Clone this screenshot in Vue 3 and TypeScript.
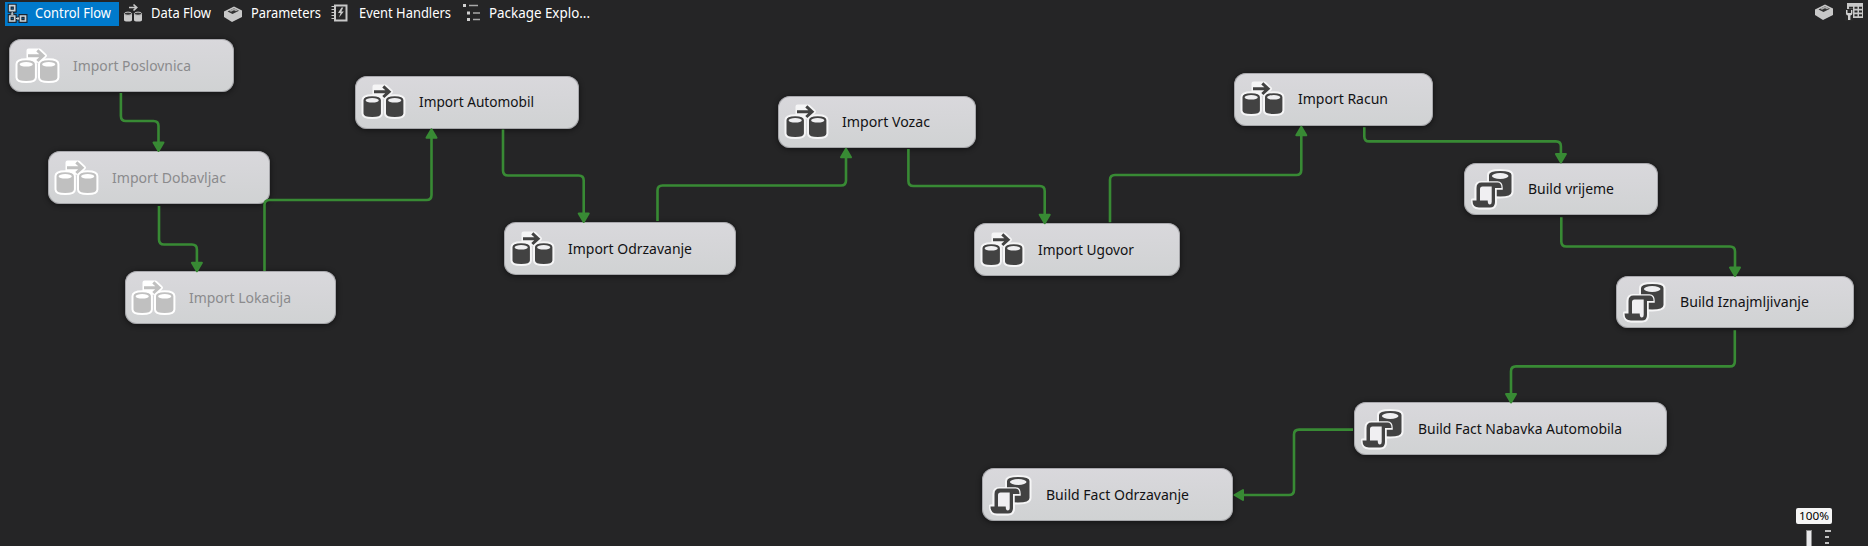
<script setup lang="ts">
type Kind = 'flow' | 'script'
interface TaskNode { label: string; kind: Kind; x: number; y: number; w: number; text: number; off?: boolean }
interface Link { path: string; tip: [number, number]; turn: number }

const tabs = [
  { id: 'control', label: 'Control Flow', width: 114, text: 76 },
  { id: 'data', label: 'Data Flow', width: 100, text: 60 },
  { id: 'params', label: 'Parameters', width: 108, text: 70 },
  { id: 'events', label: 'Event Handlers', width: 130, text: 92 },
  { id: 'explorer', label: 'Package Explo...', width: 140, text: 101 },
]

const nodes: TaskNode[] = [
  { label: 'Import Poslovnica', kind: 'flow', x: 9, y: 39.3, w: 225, text: 118, off: true },
  { label: 'Import Dobavljac', kind: 'flow', x: 48, y: 151.3, w: 222, text: 114, off: true },
  { label: 'Import Lokacija', kind: 'flow', x: 125.3, y: 271.3, w: 211, text: 102, off: true },
  { label: 'Import Automobil', kind: 'flow', x: 355, y: 76, w: 224, text: 115 },
  { label: 'Import Odrzavanje', kind: 'flow', x: 504, y: 222.3, w: 232, text: 124 },
  { label: 'Import Vozac', kind: 'flow', x: 778.3, y: 95.7, w: 197.4, text: 88 },
  { label: 'Import Ugovor', kind: 'flow', x: 974.3, y: 223.3, w: 205.3, text: 96 },
  { label: 'Import Racun', kind: 'flow', x: 1234, y: 73, w: 198.7, text: 90 },
  { label: 'Build vrijeme', kind: 'script', x: 1464, y: 162.7, w: 194, text: 86 },
  { label: 'Build Iznajmljivanje', kind: 'script', x: 1616.3, y: 275.7, w: 237.4, text: 129 },
  { label: 'Build Fact Nabavka Automobila', kind: 'script', x: 1354, y: 402.3, w: 313, text: 204 },
  { label: 'Build Fact Odrzavanje', kind: 'script', x: 982.3, y: 468.3, w: 250.7, text: 143 },
]

function route(points: [number, number][]): string {
  const r = 5
  let d = `M${points[0][0]} ${points[0][1]}`
  for (let i = 1; i < points.length - 1; i++) {
    const [px, py] = points[i - 1]
    const [x, y] = points[i]
    const [nx, ny] = points[i + 1]
    d += `L${x - Math.sign(x - px) * r} ${y - Math.sign(y - py) * r}`
    d += `Q${x} ${y} ${x + Math.sign(nx - x) * r} ${y + Math.sign(ny - y) * r}`
  }
  const last = points[points.length - 1]
  return `${d}L${last[0]} ${last[1]}`
}

function vertical(x1: number, y1: number, mid: number, x2: number, y2: number): Link {
  const down = y2 > y1
  return {
    path: route([[x1, y1], [x1, mid], [x2, mid], [x2, y2 + (down ? -8 : 8)]]),
    tip: [x2, y2],
    turn: down ? 0 : 180,
  }
}

const links: Link[] = [
  vertical(120.9, 93, 121, 158.5, 152),
  vertical(159, 206, 244.5, 196.9, 272.3),
  vertical(264.5, 271, 200, 431.5, 128.3),
  vertical(503, 129.5, 175.5, 583.7, 223),
  vertical(657.5, 221, 185.5, 846, 147.8),
  vertical(908.4, 149, 186, 1044.7, 224.2),
  vertical(1110, 222.3, 175, 1301.3, 125.8),
  vertical(1364.3, 127.3, 141.4, 1560.9, 163.5),
  vertical(1561.3, 217.3, 246.5, 1735, 277),
  vertical(1734.8, 330.3, 366.4, 1511, 403.5),
  { path: route([[1353, 429.6], [1294, 429.6], [1294, 495], [1242, 495]]), tip: [1233.5, 495], turn: 90 },
]
</script>

<template>
  <div class="designer">
    <header class="tabbar">
      <nav class="tabs">
        <div v-for="(t, i) in tabs" :key="t.id" class="tab" :class="{ active: i === 0 }" :style="{ width: t.width + 'px' }">
          <svg class="tab-icon" viewBox="0 0 20 20" width="20" height="20">
            <g v-if="t.id === 'control'" fill="none" stroke="#1b2530" stroke-width="4">
              <path d="M2.7 2.7h5v5h-5zM2.7 13h5v5h-5zM13.5 13h5v5h-5zM5.2 8v5M8 15.5h5" />
              <g stroke="#c9d3da" stroke-width="1.7">
                <path d="M2.7 2.7h5v5h-5zM2.7 13h5v5h-5zM13.5 13h5v5h-5z" />
                <path d="M5.2 9v3M3.8 11h2.8M9 15.5h3M11 14v3" stroke-width="1.1" />
              </g>
            </g>
            <g v-else-if="t.id === 'data'">
              <path d="M1 11v6q0 1.5 4 1.5t4-1.5v-6zM11 11v6q0 1.5 4 1.5t4-1.5v-6z" fill="#c8c8c8" />
              <g fill="#333" stroke="#c8c8c8"><ellipse cx="5" cy="10.7" rx="3.6" ry="1.6" /><ellipse cx="15" cy="10.7" rx="3.6" ry="1.6" /></g>
              <path d="M6 4.5h7M10.5 1.5l3.2 3-3.2 3" fill="none" stroke="#c8c8c8" stroke-width="1.7" />
            </g>
            <g v-else-if="t.id === 'params'">
              <path d="M1 8.5 11 3.500l8 4v6.500l-10 5-8-5z" fill="#c8c8c8" />
              <path d="M4.500 8.500 11 5.300l5 2.400-6.500 3.400z" fill="#333" />
              <path d="M6 7.700l2 1 3-1.500 2 1 2-1-4-2z" fill="#aaa" />
            </g>
            <g v-else-if="t.id === 'events'" fill="none" stroke="#c8c8c8">
              <path d="M4 2.500h11.500v15H4z" stroke-width="2" />
              <path d="M.5 3.500h3M.5 6.500h3M.5 9.500h3M.5 12.500h3M.5 15.500h3" />
              <path d="M10.500 4.500 7 10h2.500L8 14.500l4.800-6h-2.500l2-4z" fill="#c8c8c8" stroke="none" />
            </g>
            <g v-else fill="#d0d0d0">
              <path d="M2 1h3v3H2zM6 8.500h3v3H6zM6 15h3v3H6z" />
              <path d="M8 2.500h9M12 10h7M12 16.500h7" stroke="#a8a8a8" stroke-width="1.400" />
            </g>
          </svg>
          <svg class="tab-label" height="20" :width="t.text + 4"><text x="0" y="15" :textLength="t.text" lengthAdjust="spacingAndGlyphs">{{ t.label }}</text></svg>
        </div>
      </nav>
      <div class="tools">
        <svg viewBox="0 0 20 20" width="20" height="20">
          <path d="M1 8.500 11 3.500l8 4v6.500l-10 5-8-5z" fill="#c8c8c8" />
          <path d="M4.500 8.500 11 5.300l5 2.400-6.500 3.400z" fill="#333" />
          <path d="M6 7.700l2 1 3-1.500 2 1 2-1-4-2z" fill="#aaa" />
        </svg>
        <svg viewBox="0 0 20 20" width="20" height="20">
          <path d="M3 2h16v15H3z" fill="#c8c8c8" />
          <path d="M5 5.700h4v2H5zM10.500 5.700h3v2h-3zM15 5.700h3v2h-3zM10.500 9.500h3v2h-3zM15 9.500h3v2h-3zM10.500 13.300h3v2h-3zM15 13.300h3v2h-3z" fill="#292929" />
          <path d="M1 8h8v12H1z" fill="#292929" />
          <path d="M2 9v3.500q0 2 2 2V19h2.400v-4.500q2-.5 2-2V9H7v3H3.500V9z" fill="#d0d0d0" />
        </svg>
      </div>
    </header>

    <main class="canvas">
      <div
        v-for="n in nodes"
        :key="n.label"
        class="node"
        :class="{ disabled: n.off }"
        :style="{ left: n.x + 'px', top: n.y + 'px', width: n.w + 'px' }"
      >
        <svg class="task-icon" viewBox="0 0 54 52" width="54" height="52">
          <template v-if="n.kind === 'flow'">
            <g class="halo">
              <path d="M8.500 24v13.500q0 3.500 8.700 3.500t8.700-3.500V24q0-3.800-8.700-3.800T8.500 24zM31 24v13.500q0 3.500 8.700 3.500t8.700-3.500V24q0-3.800-8.700-3.800T31 24z" />
              <path d="M19.500 10.500h11l5.500 5.200-5 5H19.500z" />
            </g>
            <g class="ink">
              <path d="M8.500 24v13.500q0 3.500 8.700 3.500t8.700-3.500V24q0-3.800-8.700-3.800T8.500 24zM31 24v13.500q0 3.500 8.700 3.500t8.700-3.500V24q0-3.800-8.700-3.800T31 24z" />
            </g>
            <g class="lid"><ellipse cx="17.200" cy="24.300" rx="6.600" ry="2.300" /><ellipse cx="39.700" cy="24.300" rx="6.600" ry="2.300" /></g>
            <path class="arrow" d="M19 15.700h15M28.300 10.400l5.800 5.300-5.800 5.300" />
          </template>
          <template v-else>
            <g class="halo">
              <path d="M25 12v17q0 4.500 11.200 4.500T47.500 29V12q0-4-11.200-4T25 12z" />
              <path d="M12.500 37.500V25q0-5 5-5h16q3.500 0 3.500 5h-6v14q0 5.500-5 5.500H15q-6 0-6-7z" />
            </g>
            <path class="ink" d="M25 12v17q0 4.500 11.200 4.500T47.500 29V12q0-4-11.200-4T25 12z" />
            <ellipse class="lid" cx="36.200" cy="13" rx="8.300" ry="2.900" />
            <path class="scroll-gap" d="M12.500 37.500V25q0-5 5-5h16q3.500 0 3.500 5h-6v14q0 5.500-5 5.500H15q-6 0-6-7z" />
            <path class="ink" d="M12.500 37.500V25q0-5.500 5-5.500h16q4 0 4 5.500H31v14q0 5.500-5 5.500H15q-6.500 0-6.500-7z" />
            <path class="page" d="M16 37.500V26q0-2.500 2.500-2.500h9.200V39q0 2.500-2 2.500t-2-4z" />
          </template>
        </svg>
        <svg class="node-label" height="30" :width="n.text + 4"><text x="0" y="20" :textLength="n.text" lengthAdjust="spacingAndGlyphs">{{ n.label }}</text></svg>
      </div>

      <svg class="links" width="1868" height="546">
        <g v-for="l in links" :key="l.path">
          <path class="wire" :d="l.path" />
          <path class="head" d="M0-1-5-9.500H5z" :transform="`translate(${l.tip[0]} ${l.tip[1]}) rotate(${l.turn})`" />
        </g>
      </svg>

      <div class="zoom">
        <div class="zoom-value">
          <svg width="30" height="14"><text x="0" y="10.500" textLength="30" lengthAdjust="spacingAndGlyphs">100%</text></svg>
        </div>
        <div class="zoom-slider">
          <div class="track"></div>
          <div class="ticks"><i></i><i></i><i></i></div>
        </div>
      </div>
    </main>
  </div>
</template>

<style>
html,
body {
  background: #252526;
  overflow: hidden;
}
</style>

<style scoped>
.designer {
  position: relative;
  width: 1868px;
  height: 546px;
  overflow: hidden;
  background: #252526;
  font-family: 'Noto Sans', 'DejaVu Sans Condensed', sans-serif;
}
.tabbar {
  display: flex;
  justify-content: space-between;
  height: 26px;
  padding: 2px 4px 0 5px;
  box-sizing: border-box;
}
.tabs {
  display: flex;
}
.tab {
  display: flex;
  align-items: center;
  height: 24px;
  padding: 0 0 2px 2px;
  box-sizing: border-box;
  gap: 8px;
}
.tab.active {
  margin-right: 2px;
  background: #007acc;
}
.tab-icon,
.tab-label {
  flex: none;
  display: block;
  overflow: visible;
}
.tab-label text {
  font-size: 14px;
  fill: #fff;
}
.tools {
  display: flex;
  gap: 10px;
  margin-top: -1px;
}
.node {
  position: absolute;
  display: flex;
  align-items: center;
  gap: 10px;
  height: 52.500px;
  box-sizing: border-box;
  border-radius: 12px;
  background: linear-gradient(#d9d8dc, #d0d2d3);
  box-shadow: inset 0 0 0 1px rgba(130, 130, 134, 0.55), 0 1px 5px 1px rgba(0, 0, 0, 0.4);
}
.task-icon,
.node-label {
  flex: none;
  display: block;
  overflow: visible;
}
.node-label text {
  font-size: 15px;
  fill: #121214;
}
.disabled .node-label text {
  fill: #8b8b8d;
}
.halo {
  fill: #f5f5f6;
  stroke: #f5f5f6;
  stroke-width: 4;
  stroke-linejoin: round;
}
.ink {
  fill: #424242;
}
.lid {
  fill: #efeff1;
}
.page {
  fill: #f0eff2;
}
.scroll-gap {
  fill: #f5f5f6;
  stroke: #f5f5f6;
  stroke-width: 3.500;
}
.arrow {
  fill: none;
  stroke: #424242;
  stroke-width: 3;
}
.disabled .halo {
  fill: #fff;
  stroke: #fff;
}
.disabled .ink {
  fill: #c0c0c0;
}
.disabled .lid {
  fill: #fff;
}
.disabled .arrow {
  stroke: #c0c0c0;
}
.links {
  position: absolute;
  left: 0;
  top: 0;
}
.wire {
  fill: none;
  stroke: #388a34;
  stroke-width: 2.600;
}
.head {
  fill: #388a34;
  stroke: #388a34;
  stroke-width: 2;
  stroke-linejoin: round;
}
.zoom {
  position: absolute;
  left: 1796px;
  top: 508px;
  width: 36px;
}
.zoom-value {
  display: flex;
  justify-content: center;
  align-items: center;
  height: 16px;
  border-radius: 2px;
  background: #f5f5f5;
}
.zoom-value svg {
  display: block;
  overflow: visible;
}
.zoom-value text {
  font-size: 11px;
  fill: #000;
}
.zoom-slider {
  display: flex;
  gap: 13px;
  padding: 6px 0 0 10px;
}
.track {
  width: 6px;
  height: 20px;
  box-sizing: border-box;
  border: 1px solid #8a8a8a;
  background: #e8e8ea;
}
.ticks {
  display: flex;
  flex-direction: column;
  gap: 4px;
}
.ticks i {
  width: 4px;
  height: 2px;
  background: #c0c0c0;
}
.ticks i:first-child {
  width: 6px;
}
</style>
